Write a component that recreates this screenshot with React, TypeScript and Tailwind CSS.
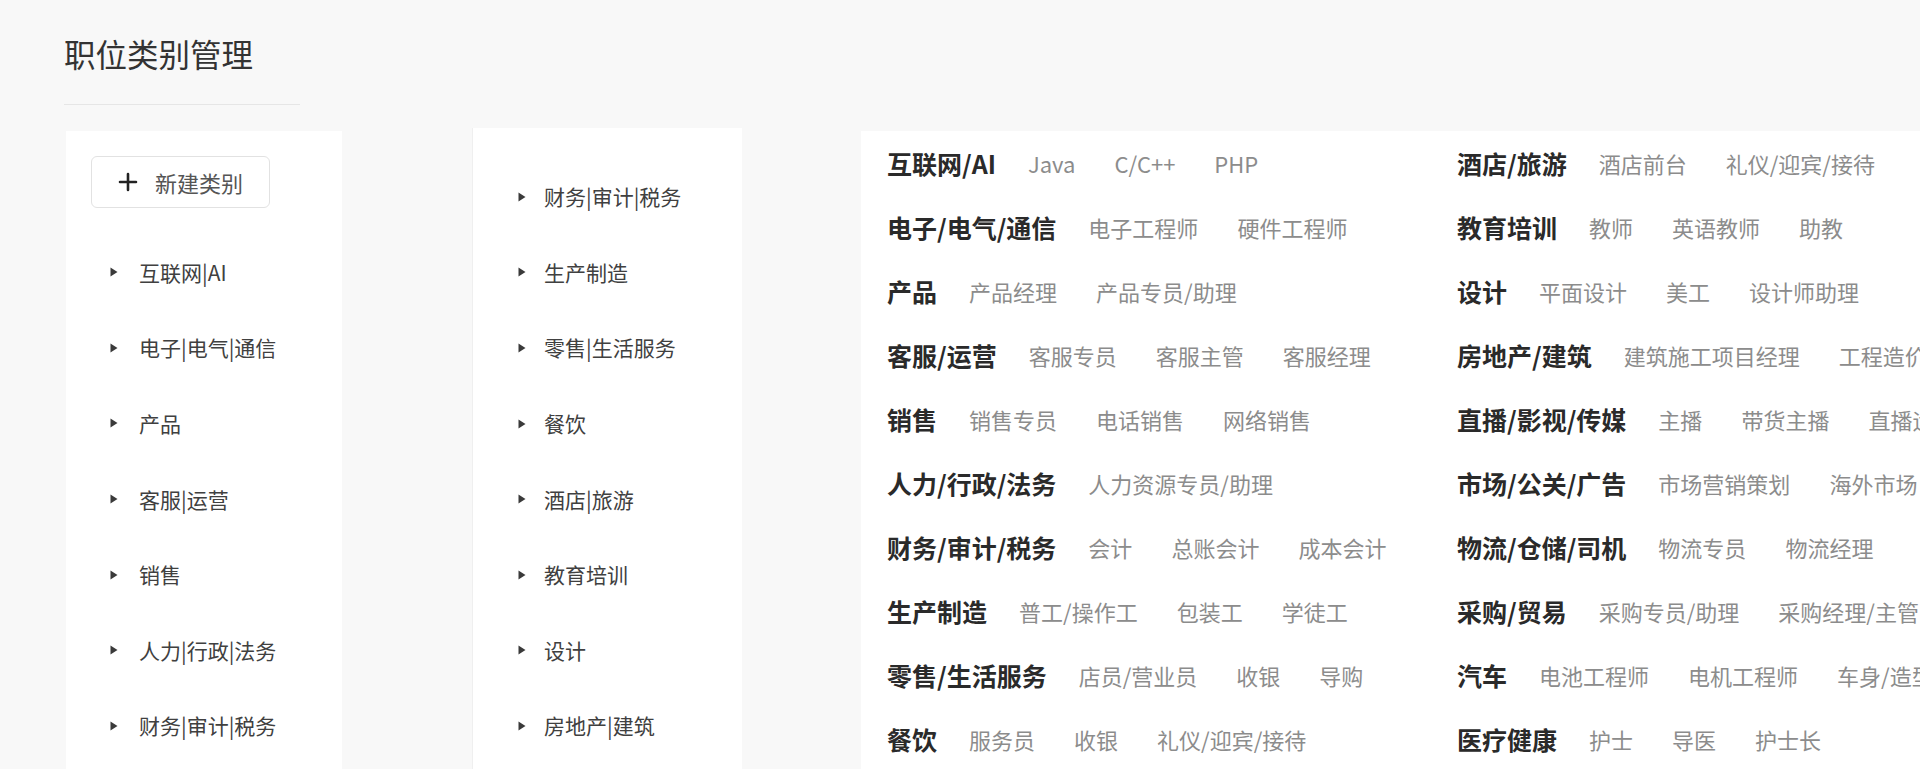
import React from "react"

const leftA = ["互联网|AI", "电子|电气|通信", "产品", "客服|运营", "销售", "人力|行政|法务", "财务|审计|税务"]
const leftB = ["财务|审计|税务", "生产制造", "零售|生活服务", "餐饮", "酒店|旅游", "教育培训", "设计", "房地产|建筑"]

const colOne: [string, string[]][] = [
  ["互联网/AI", ["Java", "C/C++", "PHP"]],
  ["电子/电气/通信", ["电子工程师", "硬件工程师"]],
  ["产品", ["产品经理", "产品专员/助理"]],
  ["客服/运营", ["客服专员", "客服主管", "客服经理"]],
  ["销售", ["销售专员", "电话销售", "网络销售"]],
  ["人力/行政/法务", ["人力资源专员/助理"]],
  ["财务/审计/税务", ["会计", "总账会计", "成本会计"]],
  ["生产制造", ["普工/操作工", "包装工", "学徒工"]],
  ["零售/生活服务", ["店员/营业员", "收银", "导购"]],
  ["餐饮", ["服务员", "收银", "礼仪/迎宾/接待"]],
]

const colTwo: [string, string[]][] = [
  ["酒店/旅游", ["酒店前台", "礼仪/迎宾/接待"]],
  ["教育培训", ["教师", "英语教师", "助教"]],
  ["设计", ["平面设计", "美工", "设计师助理"]],
  ["房地产/建筑", ["建筑施工项目经理", "工程造价"]],
  ["直播/影视/传媒", ["主播", "带货主播", "直播运营"]],
  ["市场/公关/广告", ["市场营销策划", "海外市场"]],
  ["物流/仓储/司机", ["物流专员", "物流经理"]],
  ["采购/贸易", ["采购专员/助理", "采购经理/主管"]],
  ["汽车", ["电池工程师", "电机工程师", "车身/造型设计"]],
  ["医疗健康", ["护士", "导医", "护士长"]],
]

function Caret() {
  return (
    <svg width="8" height="10" viewBox="0 0 8 10" className="shrink-0">
      <path d="M0.5 0.5 L7.5 5 L0.5 9.5 Z" fill="#3a3a3a" />
    </svg>
  )
}

function TreeItem({ label, gap }: { label: string; gap: string }) {
  return (
    <div className={`h-[75.6px] flex items-center ${gap}`}>
      <Caret />
      <span className="text-[21px] leading-none text-[#404040] whitespace-nowrap">{label}</span>
    </div>
  )
}

function CategoryRow({ title, items }: { title: string; items: string[] }) {
  return (
    <div className="h-[64px] flex items-center whitespace-nowrap">
      <span className="text-[25px] font-bold leading-none text-[#2a2a2a] mr-[32px]">{title}</span>
      <div className="flex items-center gap-[39px]">
        {items.map((it, i) => (
          <span key={i} className="text-[22px] leading-none text-[#8c8c8c]">
            {it}
          </span>
        ))}
      </div>
    </div>
  )
}

export default function App() {
  return (
    <div
      className="w-[1920px] h-[769px] overflow-hidden bg-[#f8f8f8] flex pl-[64px]"
      style={{ fontFamily: '"Noto Sans CJK SC", "Noto Sans", sans-serif' }}
    >
      {/* column: title + tree */}
      <div className="w-[278px] shrink-0 flex flex-col">
        <h1 className="pt-[38px] text-[31.5px] leading-none font-normal text-[#333] whitespace-nowrap">职位类别管理</h1>
        <div className="mt-[34px] h-px w-[236px] bg-[#e6e6e6]" />
        <div className="mt-[26px] ml-[2px] w-[276px] flex-1 bg-white overflow-hidden pt-[25px] pl-[25px]">
          <button className="w-[179px] h-[52px] rounded-md border border-[#e2e2e2] bg-white flex items-center pl-[26px]">
            <svg width="20" height="20" viewBox="0 0 20 20" className="shrink-0">
              <path d="M10 2 V18 M2 10 H18" stroke="#222" strokeWidth="2.6" strokeLinecap="round" />
            </svg>
            <span className="ml-[17px] text-[22px] leading-none text-[#555]">新建类别</span>
          </button>
          <div className="mt-[27px] pl-[19px]">
            {leftA.map((l, i) => (
              <TreeItem key={i} label={l} gap="gap-[21px]" />
            ))}
          </div>
        </div>
      </div>

      {/* second tree panel */}
      <div className="ml-[130px] mt-[128px] w-[270px] shrink-0 bg-white border-l border-[#efefef] overflow-hidden pt-[31px] pl-[45px]">
        {leftB.map((l, i) => (
          <TreeItem key={i} label={l} gap="gap-[18px]" />
        ))}
      </div>

      {/* category overview */}
      <div className="ml-[119px] mt-[131px] flex-1 bg-white overflow-hidden pl-[26px]">
        <div className="grid grid-cols-[570px_1fr]">
          <div className="flex flex-col">
            {colOne.map(([t, items], i) => (
              <CategoryRow key={i} title={t} items={items} />
            ))}
          </div>
          <div className="flex flex-col">
            {colTwo.map(([t, items], i) => (
              <CategoryRow key={i} title={t} items={items} />
            ))}
          </div>
        </div>
      </div>
    </div>
  )
}
